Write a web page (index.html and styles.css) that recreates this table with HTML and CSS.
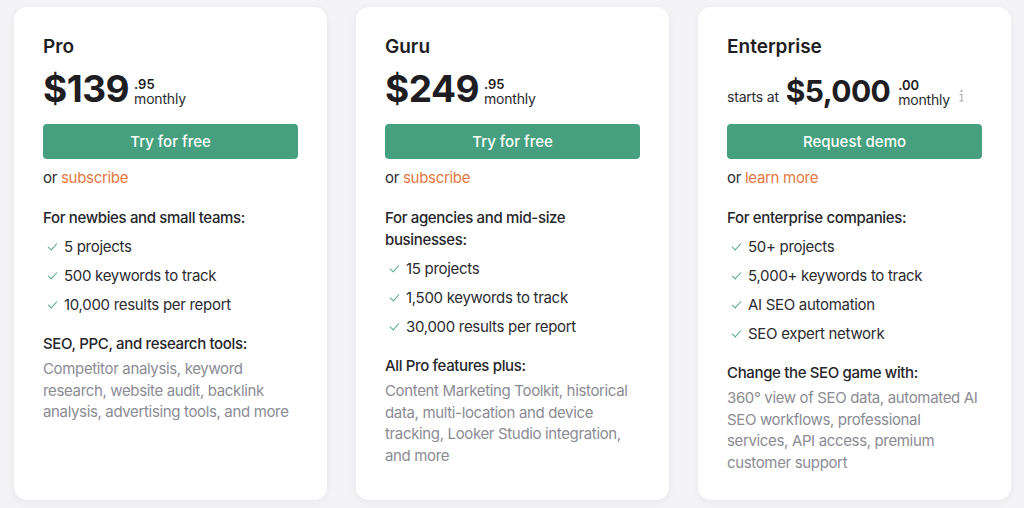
FILE: index.html
```html
<!DOCTYPE html>
<html lang="en">
<head>
<meta charset="utf-8">
<title>Pricing</title>
<link rel="stylesheet" href="styles.css">
</head>
<body>
<div class="plans">
  <section class="card">
    <h2 class="name">Pro</h2>
    <div class="price">
      <span class="amount">$139</span>
      <span class="per"><span class="cents">.95</span><span class="period">monthly</span></span>
    </div>
    <a class="btn" href="#">Try for free</a>
    <p class="alt">or <a href="#">subscribe</a></p>
    <h3 class="lead">For newbies and small teams:</h3>
    <ul class="feats">
      <li>5 projects</li>
      <li>500 keywords to track</li>
      <li>10,000 results per report</li>
    </ul>
    <h3 class="lead">SEO, PPC, and research tools:</h3>
    <p class="desc">Competitor analysis, keyword research, website audit, backlink analysis, advertising tools, and more</p>
  </section>
  <section class="card">
    <h2 class="name">Guru</h2>
    <div class="price">
      <span class="amount">$249</span>
      <span class="per"><span class="cents">.95</span><span class="period">monthly</span></span>
    </div>
    <a class="btn" href="#">Try for free</a>
    <p class="alt">or <a href="#">subscribe</a></p>
    <h3 class="lead">For agencies and mid-size businesses:</h3>
    <ul class="feats">
      <li>15 projects</li>
      <li>1,500 keywords to track</li>
      <li>30,000 results per report</li>
    </ul>
    <h3 class="lead">All Pro features plus:</h3>
    <p class="desc">Content Marketing Toolkit, historical data, multi-location and device tracking, Looker Studio integration, and more</p>
  </section>
  <section class="card">
    <h2 class="name">Enterprise</h2>
    <div class="price ent">
      <span class="from">starts at</span>
      <span class="amount">$5,000</span>
      <span class="per"><span class="cents">.00</span><span class="period">monthly</span></span>
      <svg class="info" width="8" height="14" viewBox="0 0 8 14"><circle cx="4.5" cy="2" r="1.1" fill="#a6a6ae"/><path d="M2.5 5.5h2.3v6.5M2.5 12h4" stroke="#a6a6ae" stroke-width="1.1" fill="none"/></svg>
    </div>
    <a class="btn" href="#">Request demo</a>
    <p class="alt">or <a href="#">learn more</a></p>
    <h3 class="lead">For enterprise companies:</h3>
    <ul class="feats">
      <li>50+ projects</li>
      <li>5,000+ keywords to track</li>
      <li>AI SEO automation</li>
      <li>SEO expert network</li>
    </ul>
    <h3 class="lead">Change the SEO game with:</h3>
    <p class="desc">360° view of SEO data, automated AI SEO workflows, professional services, API access, premium customer support</p>
  </section>
</div>
</body>
</html>
```

FILE: styles.css
```css
* { box-sizing: border-box; }
html, body { margin: 0; }
body {
  background: #f4f4f7;
  font-family: Inter, "Noto Sans", sans-serif;
  color: #2b2b30;
  width: 1024px;
  height: 508px;
  overflow: hidden;
}
.plans {
  display: flex;
  gap: 29px;
  padding: 7px 0 0 14px;
}
.card {
  width: 313px;
  height: 493px;
  background: #fff;
  border-radius: 13px;
  box-shadow: 0 2px 10px rgba(40, 40, 70, 0.06);
  padding: 29px 29px 0 29px;
}
.name {
  margin: 0;
  font-size: 19px;
  line-height: 22px;
  font-weight: 600;
  color: #1d1d22;
}
.price {
  display: flex;
  align-items: flex-end;
  margin-top: 13px;
  height: 36px;
}
.amount {
  font-size: 37px;
  font-weight: 700;
  line-height: 36px;
  color: #1d1d22;
  letter-spacing: -0.5px;
}
.per {
  display: flex;
  flex-direction: column;
  margin-left: 5px;
  margin-bottom: 1px;
}
.cents {
  font-size: 13px;
  font-weight: 600;
  line-height: 14px;
  color: #1d1d22;
}
.period {
  font-size: 14px;
  line-height: 15px;
  color: #2b2b30;
  letter-spacing: -0.2px;
}
.ent .from {
  font-size: 14px;
  line-height: 16px;
  margin-right: 7px;
  margin-bottom: 2px;
  letter-spacing: -0.2px;
}
.ent .amount { font-size: 30px; line-height: 32px; letter-spacing: -0.6px; }
.ent .per { margin-bottom: 0; margin-left: 8px; }
.info { margin-left: 7px; margin-bottom: 4px; }
.btn {
  display: flex;
  align-items: center;
  justify-content: center;
  margin-top: 17px;
  height: 35px;
  background: #46a07f;
  color: #fff;
  border-radius: 4px;
  font-size: 15px;
  font-weight: 500;
  text-decoration: none;
}
.alt {
  margin: 9px 0 0;
  font-size: 15px;
  line-height: 20px;
  color: #2b2b30;
  letter-spacing: -0.3px;
}
.alt a { color: #e5773f; text-decoration: none; }
.lead {
  margin: 19px 0 0;
  font-size: 15px;
  line-height: 22px;
  font-weight: 450;
  color: #26262b;
  letter-spacing: -0.35px;
}
.feats {
  list-style: none;
  margin: 0;
  padding: 0;
}
.feats li {
  position: relative;
  margin-top: 7px;
  padding-left: 21px;
  font-size: 15px;
  line-height: 22px;
  letter-spacing: -0.3px;
}
.feats li::before {
  content: "";
  position: absolute;
  left: 5px;
  top: 7px;
  width: 8px;
  height: 4px;
  border-left: 1.8px solid #55a98a;
  border-bottom: 1.8px solid #55a98a;
  transform: rotate(-48deg);
}
.feats + .lead { margin-top: 17px; }
.desc {
  margin: 3px 0 0;
  font-size: 15px;
  line-height: 21.5px;
  color: #8b8b94;
  letter-spacing: -0.35px;
}
```
